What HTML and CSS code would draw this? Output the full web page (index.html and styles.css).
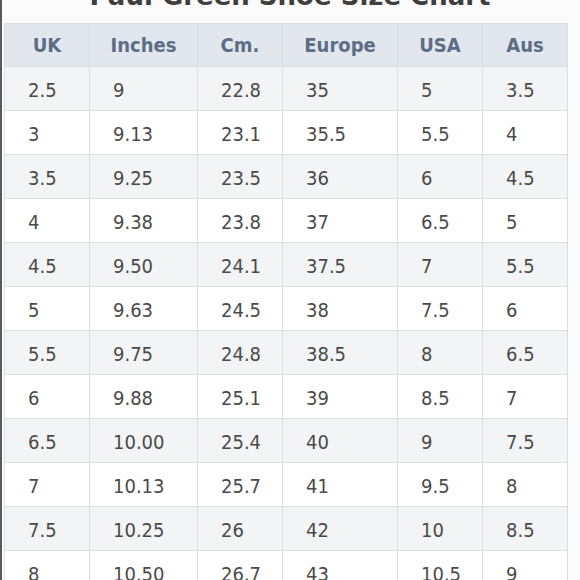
FILE: index.html
```html
<!DOCTYPE html>
<html>
<head>
<meta charset="utf-8">
<link rel="stylesheet" href="styles.css">
</head>
<body>
<div class="frame">
  <h1 class="title">Paul Green Shoe Size Chart</h1>
  <table class="chart">
    <thead>
      <tr><th class="c1">UK</th><th class="c2">Inches</th><th class="c3">Cm.</th><th class="c4">Europe</th><th class="c5">USA</th><th class="c6">Aus</th></tr>
    </thead>
    <tbody>
      <tr><td>2.5</td><td>9</td><td>22.8</td><td>35</td><td>5</td><td>3.5</td></tr>
      <tr><td>3</td><td>9.13</td><td>23.1</td><td>35.5</td><td>5.5</td><td>4</td></tr>
      <tr><td>3.5</td><td>9.25</td><td>23.5</td><td>36</td><td>6</td><td>4.5</td></tr>
      <tr><td>4</td><td>9.38</td><td>23.8</td><td>37</td><td>6.5</td><td>5</td></tr>
      <tr><td>4.5</td><td>9.50</td><td>24.1</td><td>37.5</td><td>7</td><td>5.5</td></tr>
      <tr><td>5</td><td>9.63</td><td>24.5</td><td>38</td><td>7.5</td><td>6</td></tr>
      <tr><td>5.5</td><td>9.75</td><td>24.8</td><td>38.5</td><td>8</td><td>6.5</td></tr>
      <tr><td>6</td><td>9.88</td><td>25.1</td><td>39</td><td>8.5</td><td>7</td></tr>
      <tr><td>6.5</td><td>10.00</td><td>25.4</td><td>40</td><td>9</td><td>7.5</td></tr>
      <tr><td>7</td><td>10.13</td><td>25.7</td><td>41</td><td>9.5</td><td>8</td></tr>
      <tr><td>7.5</td><td>10.25</td><td>26</td><td>42</td><td>10</td><td>8.5</td></tr>
      <tr><td>8</td><td>10.50</td><td>26.7</td><td>43</td><td>10.5</td><td>9</td></tr>
    </tbody>
  </table>
</div>
</body>
</html>
```
FILE: styles.css
```css
html, body {
  margin: 0;
  padding: 0;
  background: #fbfbfb;
  height: 100%;
  overflow: hidden;
}
.frame {
  display: flow-root;
  border-left: 2px solid #5a5a5a;
  padding-left: 2px;
  height: 100%;
  box-sizing: border-box;
}
.title {
  margin: -26px 0 0 0;
  height: 49px;
  line-height: 44px;
  text-align: center;
  font-family: "DejaVu Sans", sans-serif;
  font-weight: bold;
  font-size: 26px;
  color: #3f3f3f;
  width: 572px;
}
.chart {
  border-collapse: collapse;
  table-layout: fixed;
  font-family: "DejaVu Sans Condensed", "DejaVu Sans", sans-serif;
  font-size: 20px;
  color: #4a4a4a;
}
.chart th, .chart td {
  border: 1px solid #dcdfe2;
  padding: 0 0 0 23px;
  text-align: left;
  white-space: nowrap;
}
.chart th {
  height: 42px;
  background: #e2e7ed;
  color: #5b6e86;
  font-weight: bold;
  text-align: center;
  padding: 0;
}
.chart td {
  height: 41px;
  padding-top: 2px;
  background: #ffffff;
}
.chart tbody tr:nth-child(odd) td {
  background: #f3f4f5;
}
.c1 { width: 84px; }
.c2 { width: 107px; }
.c3 { width: 84px; }
.c4 { width: 114px; }
.c5 { width: 84px; }
.c6 { width: 84px; }
```
